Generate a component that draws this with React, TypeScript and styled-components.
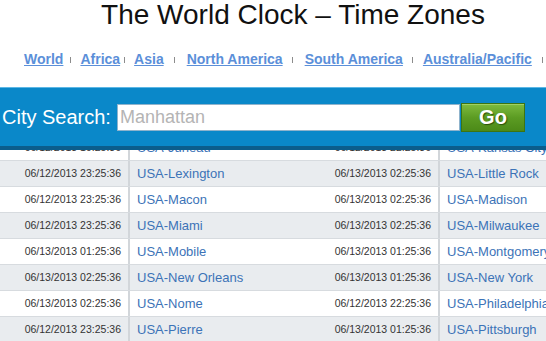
import React from "react";
import styled, { createGlobalStyle } from "styled-components";

const Global = createGlobalStyle`
  html, body { margin: 0; padding: 0; background: #fff; }
  body { font-family: "Liberation Sans", Arial, sans-serif; overflow: hidden; }
`;

const Page = styled.div`
  width: 546px;
  height: 341px;
  overflow: hidden;
  background: #fff;
`;

const Title = styled.h1`
  margin: 0;
  padding-left: 40px;
  text-align: center;
  font: 400 28px/30px "Liberation Sans", Arial, sans-serif;
  color: #111;
  white-space: nowrap;
`;

const Nav = styled.nav`
  display: flex;
  align-items: center;
  height: 18px;
  margin: 20px 0 19px;
  padding-left: 24px;
  white-space: nowrap;
`;

const NavLink = styled.a`
  font: 700 14px/18px "Liberation Sans", Arial, sans-serif;
  color: #5b8fd9;
  text-decoration: underline;
  cursor: pointer;
`;

const Sep = styled.span<{ $l: number; $r: number }>`
  display: inline-block;
  flex: none;
  width: 1px;
  height: 6px;
  margin: 1px ${(p) => p.$r}px 0 ${(p) => p.$l}px;
  background: #8c8c8c;
`;

const SearchBar = styled.form`
  display: flex;
  align-items: center;
  height: 58px;
  padding-left: 2px;
  background: #0a88c9;
  border-top: 1px solid #5cb7e5;
  border-bottom: 4px solid #0b5d8c;
`;

const Label = styled.label`
  width: 115px;
  font: 400 20px/22px "Liberation Sans", Arial, sans-serif;
  color: #fff;
  white-space: nowrap;
`;

const Input = styled.input`
  box-sizing: border-box;
  width: 343px;
  height: 27px;
  margin: 0;
  padding: 0 0 0 2px;
  border: 1px solid #8fb3cc;
  background: #fff;
  font: 400 18px "Liberation Sans", Arial, sans-serif;
  color: #333;
  outline: none;
  &::placeholder { color: #b4b4b4; }
`;

const GoButton = styled.button`
  box-sizing: border-box;
  width: 64px;
  height: 29px;
  margin: 0 0 0 1px;
  padding: 0;
  border: 1px solid #3c7412;
  background: linear-gradient(#7dbb3f, #5c9c23 50%, #4c8a18);
  box-shadow: inset 0 1px 0 #9fd165;
  font: 700 20px/27px "Liberation Sans", Arial, sans-serif;
  color: #fff;
  text-shadow: 1px 1px 1px #2a520a;
  cursor: pointer;
`;

const Viewport = styled.div`
  overflow: hidden;
  height: 191px;
`;

const Table = styled.div`
  display: flex;
  flex-direction: column;
  width: 620px;
  margin-top: -15px;
`;

const Row = styled.div<{ $alt: boolean }>`
  display: grid;
  grid-template-columns: 130px 180px 130px 180px;
  height: 25px;
  border-bottom: 1px solid #d7dbdf;
  background: ${(p) => (p.$alt ? "#e9ecef" : "#ffffff")};
`;

const DateCell = styled.div`
  padding-right: 7px;
  border-right: 2px solid #d2d6da;
  text-align: right;
  font: 400 10.5px/25px "Liberation Sans", Arial, sans-serif;
  color: #333;
  white-space: nowrap;
`;

const CityCell = styled.a`
  padding-left: 7px;
  font: 400 13px/25px "Liberation Sans", Arial, sans-serif;
  color: #3c73b7;
  text-decoration: none;
  white-space: nowrap;
`;

const navItems: { label: string; l: number; r: number }[] = [
  { label: "World", l: 7, r: 9 },
  { label: "Africa", l: 4, r: 9 },
  { label: "Asia", l: 10, r: 12 },
  { label: "North America", l: 9, r: 12 },
  { label: "South America", l: 9, r: 10 },
  { label: "Australia/Pacific", l: 10, r: 0 },
];

const rows: [string, string, string, string][] = [
  ["06/12/2013 19:25:36", "USA-Juneau", "06/12/2013 22:25:36", "USA-Kansas City"],
  ["06/12/2013 23:25:36", "USA-Lexington", "06/13/2013 02:25:36", "USA-Little Rock"],
  ["06/12/2013 23:25:36", "USA-Macon", "06/13/2013 02:25:36", "USA-Madison"],
  ["06/12/2013 23:25:36", "USA-Miami", "06/13/2013 02:25:36", "USA-Milwaukee"],
  ["06/13/2013 01:25:36", "USA-Mobile", "06/13/2013 01:25:36", "USA-Montgomery"],
  ["06/13/2013 02:25:36", "USA-New Orleans", "06/13/2013 01:25:36", "USA-New York"],
  ["06/13/2013 02:25:36", "USA-Nome", "06/12/2013 22:25:36", "USA-Philadelphia"],
  ["06/12/2013 23:25:36", "USA-Pierre", "06/13/2013 01:25:36", "USA-Pittsburgh"],
];

export default function App() {
  return (
    <Page>
      <Global />
      <Title>The World Clock – Time Zones</Title>
      <Nav>
        {navItems.map((n) => (
          <React.Fragment key={n.label}>
            <NavLink>{n.label}</NavLink>
            <Sep $l={n.l} $r={n.r} />
          </React.Fragment>
        ))}
      </Nav>
      <SearchBar onSubmit={(e) => e.preventDefault()}>
        <Label>City Search:</Label>
        <Input placeholder="Manhattan" />
        <GoButton type="submit">Go</GoButton>
      </SearchBar>
      <Viewport>
        <Table>
          {rows.map((r, i) => (
            <Row key={r[1]} $alt={i % 2 === 1}>
              <DateCell>{r[0]}</DateCell>
              <CityCell>{r[1]}</CityCell>
              <DateCell>{r[2]}</DateCell>
              <CityCell>{r[3]}</CityCell>
            </Row>
          ))}
        </Table>
      </Viewport>
    </Page>
  );
}
